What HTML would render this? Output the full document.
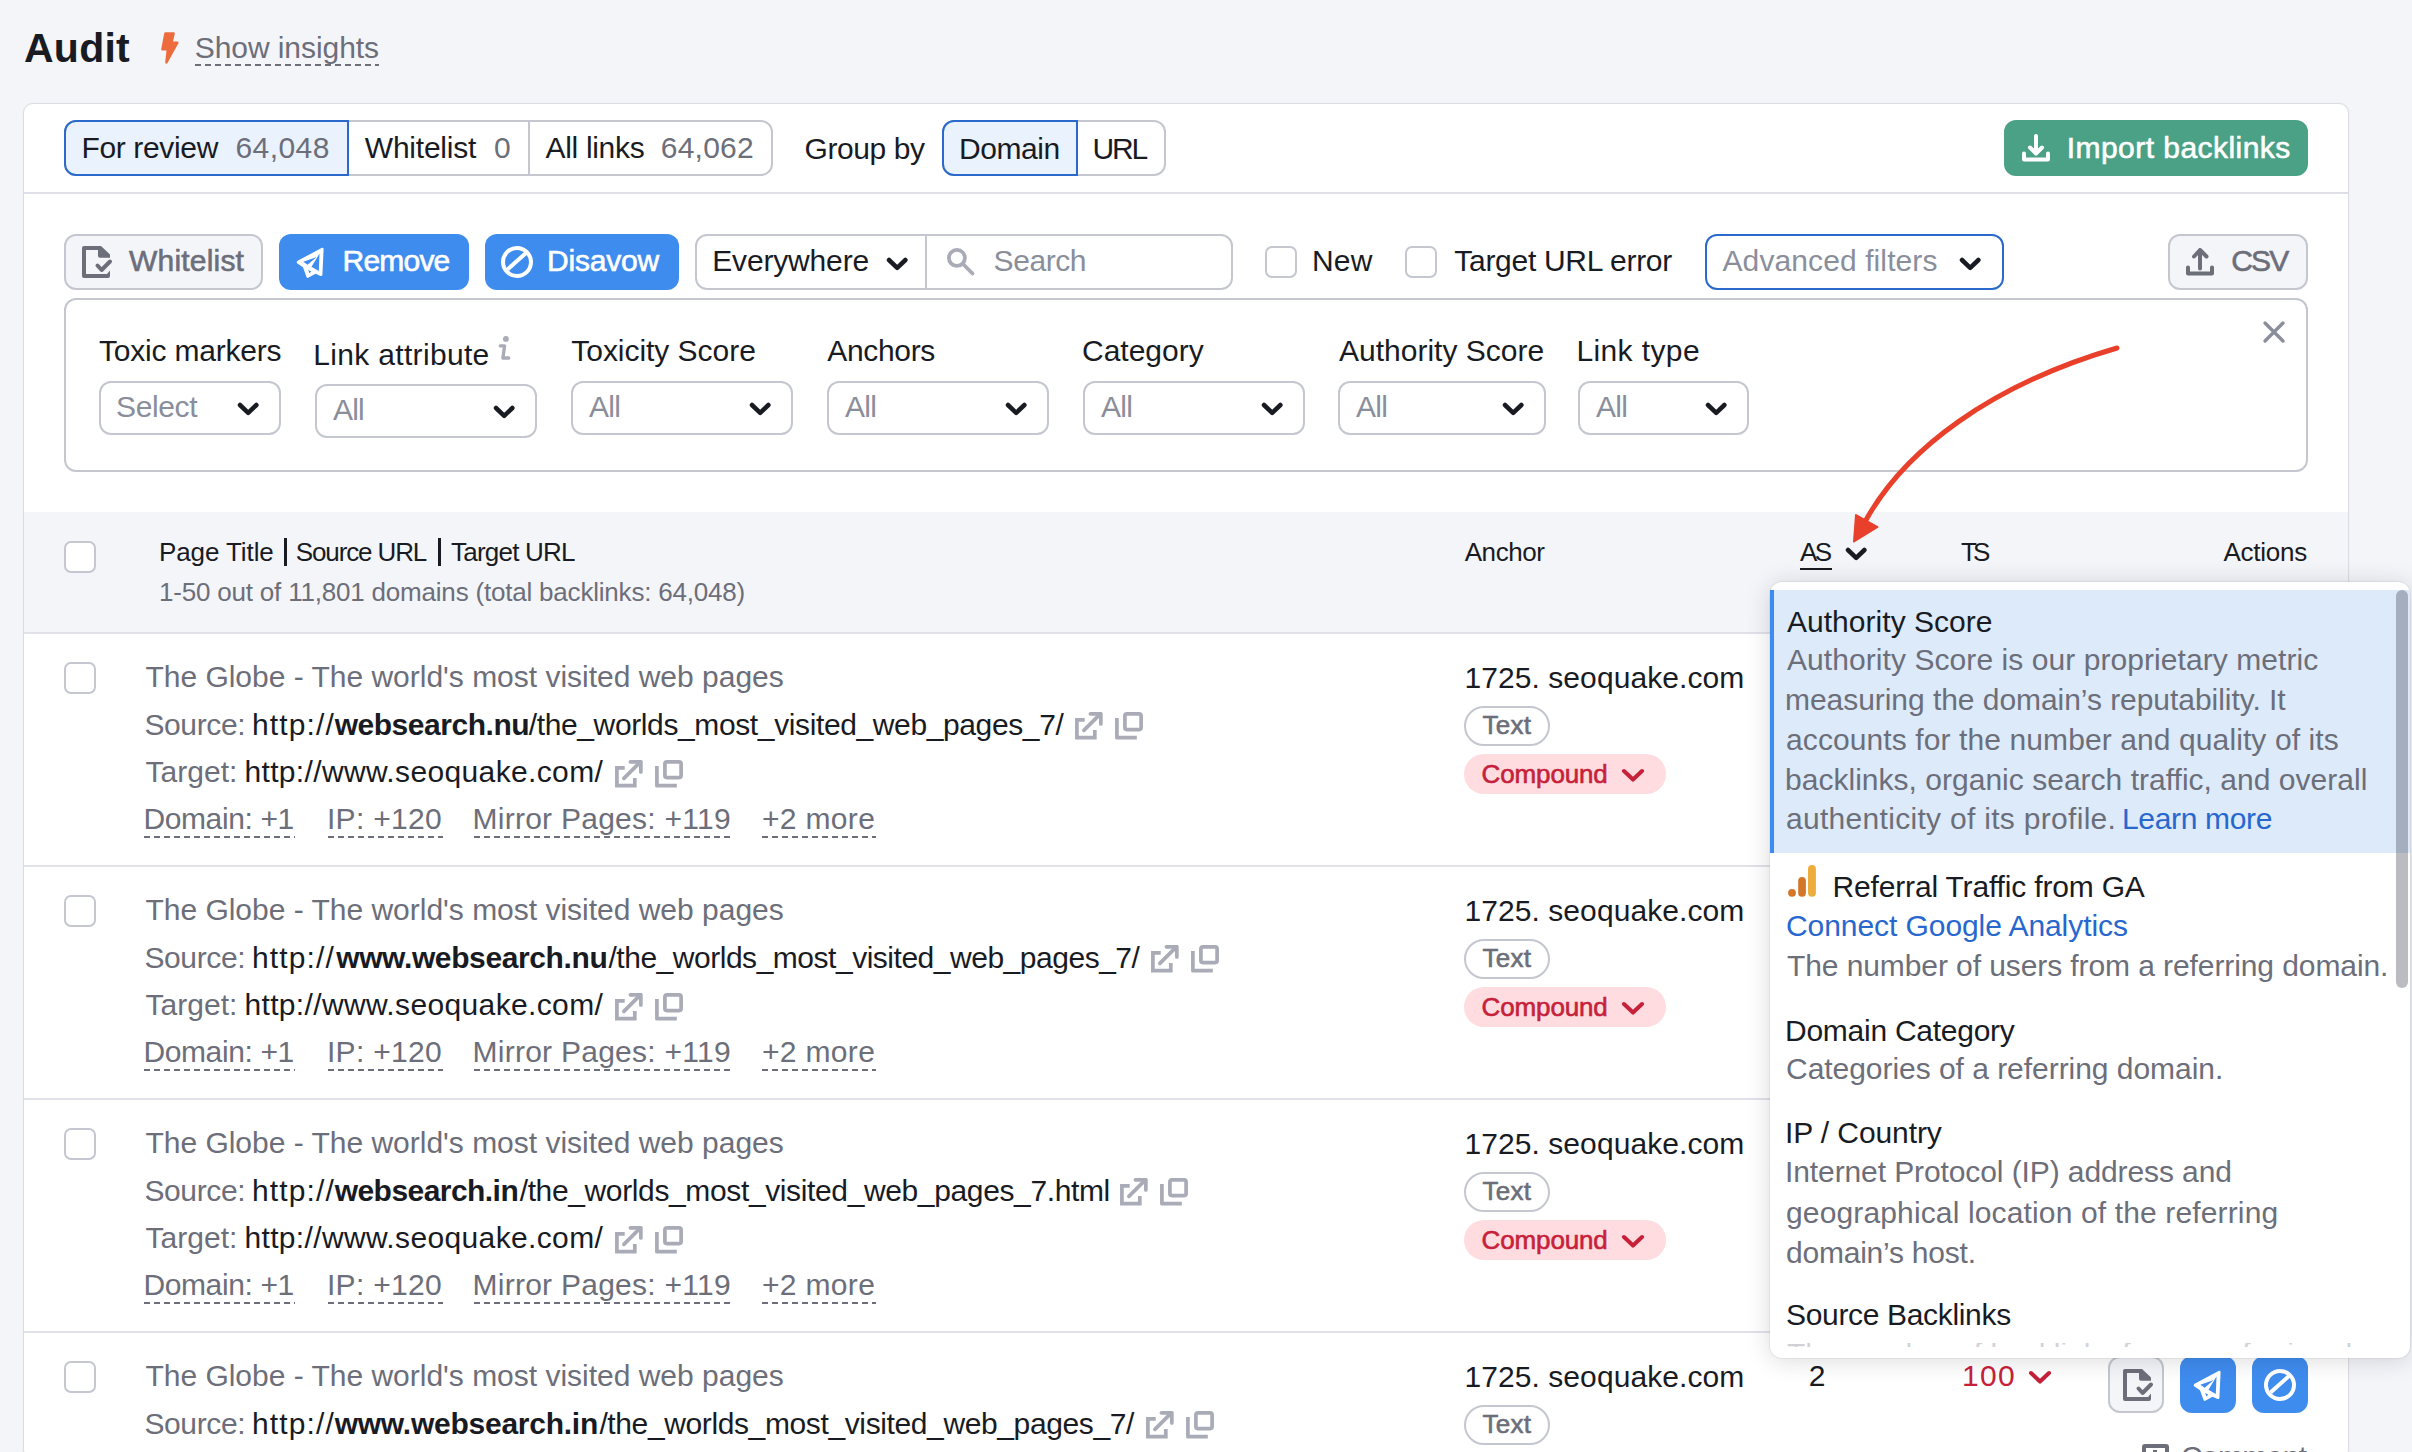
<!DOCTYPE html>
<html><head><meta charset="utf-8"><title>Audit</title>
<style>
html,body{margin:0;padding:0;width:2412px;height:1452px;overflow:hidden;background:#F4F5F9;font-family:"Liberation Sans", sans-serif;}
.a{position:absolute;box-sizing:border-box;}
.t{position:absolute;white-space:pre;}

</style></head><body>
<div class='t' style='left:24.0px;top:28.0px;font-size:41px;line-height:41px;font-weight:700;color:#191B23;letter-spacing:0.25px;'>Audit</div>
<svg class='a' style='left:160px;top:31px;' width='21' height='34' viewBox='0 0 21 34'><path d='M5.4 2.4 H13.6 L11.6 11.6 H17.4 L6.4 31.4 L7.8 18.2 H2.4 Z' fill='#EC6C3E' stroke='#EC6C3E' stroke-width='2.4' stroke-linejoin='round'/></svg>
<div class='t' style='left:194.7px;top:33.0px;font-size:30px;line-height:30px;font-weight:400;color:#6C6E79;letter-spacing:-0.06px;'>Show insights</div>
<div class='a' style='left:195px;top:64px;width:184px;height:2px;background:repeating-linear-gradient(90deg,#6C6E79 0 6px,transparent 6px 10px)'></div>
<div class='a' style='left:23px;top:103px;width:2326px;height:1357px;background:#fff;border:1px solid #DCDDE4;border-radius:10px;box-shadow:0 0 2px rgba(25,27,35,0.06);'></div>
<div class='a' style='left:64px;top:120px;width:709px;height:56px;border:2px solid #C4C7CF;border-radius:12px;background:#fff;'></div>
<div class='a' style='left:528px;top:120px;width:2px;height:56px;background:#C4C7CF;'></div>
<div class='a' style='left:64px;top:120px;width:285px;height:56px;border:2px solid #2B6ACC;border-radius:12px 0 0 12px;background:#EAF2FD;'></div>
<div class='t' style='left:81.4px;top:133.4px;font-size:30px;line-height:30px;font-weight:400;color:#191B23;letter-spacing:-0.34px;'>For review</div>
<div class='t' style='left:235.5px;top:133.4px;font-size:30px;line-height:30px;font-weight:400;color:#6C6E79;letter-spacing:0.42px;'>64,048</div>
<div class='t' style='left:364.8px;top:133.4px;font-size:30px;line-height:30px;font-weight:400;color:#191B23;letter-spacing:-0.23px;'>Whitelist</div>
<div class='t' style='left:494.0px;top:133.4px;font-size:30px;line-height:30px;font-weight:400;color:#6C6E79;letter-spacing:0.00px;'>0</div>
<div class='t' style='left:545.6px;top:133.4px;font-size:30px;line-height:30px;font-weight:400;color:#191B23;letter-spacing:-0.33px;'>All links</div>
<div class='t' style='left:660.7px;top:133.4px;font-size:30px;line-height:30px;font-weight:400;color:#6C6E79;letter-spacing:0.26px;'>64,062</div>
<div class='t' style='left:804.5px;top:133.5px;font-size:30px;line-height:30px;font-weight:400;color:#191B23;letter-spacing:-0.43px;'>Group by</div>
<div class='a' style='left:942px;top:120px;width:224px;height:56px;border:2px solid #C4C7CF;border-radius:12px;background:#fff;'></div>
<div class='a' style='left:942px;top:120px;width:136px;height:56px;border:2px solid #2B6ACC;border-radius:12px 0 0 12px;background:#EAF2FD;'></div>
<div class='t' style='left:958.9px;top:133.5px;font-size:30px;line-height:30px;font-weight:400;color:#191B23;letter-spacing:-0.42px;'>Domain</div>
<div class='t' style='left:1092.5px;top:133.5px;font-size:30px;line-height:30px;font-weight:400;color:#191B23;letter-spacing:-2.15px;'>URL</div>
<div class='a' style='left:2004px;top:120px;width:304px;height:56px;background:#4BA185;border-radius:12px;'></div>
<svg class='a' style='left:2014px;top:126px;' width='44' height='44' viewBox='0 0 44 44'><path d='M22 10 V27 M16 21.5 L22 27.5 L28 21.5 M10 27.5 V33.5 H34 V27.5' fill='none' stroke='#fff' stroke-width='4' stroke-linecap='round' stroke-linejoin='round'/></svg>
<div class='t' style='left:2066.7px;top:133.0px;font-size:30px;line-height:30px;font-weight:400;color:#fff;letter-spacing:0.46px;-webkit-text-stroke:0.6px;'>Import backlinks</div>
<div class='a' style='left:24px;top:192px;width:2324px;height:2px;background:#DEDFE8;'></div>
<div class='a' style='left:64px;top:234px;width:199px;height:56px;background:#F4F5F9;border:2px solid #C4C7CF;border-radius:12px;'></div>
<svg class='a' style='left:76px;top:240px;' width='44' height='44' viewBox='0 0 44 44'><path d='M6 8 Q6 6 8 6 H25 L34 14.5 V17.7 H24 Q22 17.7 22 15.7 V10 H10 V34 H31 L34 30.5 V36 Q34 38 32 38 H8 Q6 38 6 36 Z' fill='#6C6E79'/><path d='M21.5 25.5 L25.6 30 L34 21.5' fill='none' stroke='#6C6E79' stroke-width='4' stroke-linecap='round' stroke-linejoin='round'/></svg>
<div class='t' style='left:129.0px;top:246.0px;font-size:30px;line-height:30px;font-weight:400;color:#6C6E79;letter-spacing:0.20px;-webkit-text-stroke:0.6px;'>Whitelist</div>
<div class='a' style='left:279px;top:234px;width:190px;height:56px;background:#3F8CEF;border-radius:12px;'></div>
<svg class='a' style='left:290px;top:240px;' width='44' height='44' viewBox='0 0 44 44'><path fill-rule='evenodd' fill='#fff' d='M6.6 22.4 Q6.8 21.2 8 20.6 L32 7.8 Q33.6 7.6 33.6 9.2 L32.4 35 Q32 36.4 30.6 36 L25.5 33.8 L18.2 37.8 Q16.8 38.2 16.4 36.8 L13 27.3 L7.4 23.6 Z M13.3 21.8 L26.7 16.9 L17.6 24.8 Z M29.5 13.6 L28.8 30.9 L21.5 26.7 Z M18.2 30 L21.2 31.6 L19.4 33.2 Z'/></svg>
<div class='t' style='left:342.5px;top:246.0px;font-size:30px;line-height:30px;font-weight:400;color:#fff;letter-spacing:-0.78px;-webkit-text-stroke:0.6px;'>Remove</div>
<div class='a' style='left:485px;top:234px;width:194px;height:56px;background:#3F8CEF;border-radius:12px;'></div>
<svg class='a' style='left:494px;top:240px;' width='44' height='44' viewBox='0 0 44 44'><circle cx='23' cy='22' r='14' fill='none' stroke='#fff' stroke-width='4'/><path d='M13.5 29.5 L32.5 12.5' stroke='#fff' stroke-width='4'/></svg>
<div class='t' style='left:547.0px;top:246.0px;font-size:30px;line-height:30px;font-weight:400;color:#fff;letter-spacing:-0.22px;-webkit-text-stroke:0.6px;'>Disavow</div>
<div class='a' style='left:695px;top:234px;width:538px;height:56px;border:2px solid #C4C7CF;border-radius:12px;background:#fff;'></div>
<div class='a' style='left:925px;top:234px;width:2px;height:56px;background:#C4C7CF;'></div>
<div class='t' style='left:712.2px;top:246.0px;font-size:30px;line-height:30px;font-weight:400;color:#191B23;letter-spacing:-0.16px;'>Everywhere</div>
<svg class='a' style='left:885.8px;top:257.105px;' width='22.40000000000009' height='13.789999999999964' viewBox='0 0 22.40000000000009 13.789999999999964'><path d='M3 3 L11.2 10.79 L19.4 3' fill='none' stroke='#191B23' stroke-width='4.5' stroke-linecap='round' stroke-linejoin='round'/></svg>
<svg class='a' style='left:940px;top:242px;' width='44' height='44' viewBox='0 0 44 44'><circle cx='16.9' cy='15.9' r='8' fill='none' stroke='#A9ABB6' stroke-width='3.8'/><path d='M23.5 22.5 L32.5 31.5' stroke='#A9ABB6' stroke-width='3.8' stroke-linecap='round'/></svg>
<div class='t' style='left:993.6px;top:246.0px;font-size:30px;line-height:30px;font-weight:400;color:#8A8E9B;letter-spacing:-0.44px;'>Search</div>
<div class='a' style='left:1265px;top:246px;width:32px;height:32px;background:#fff;border:2px solid #C4C7CF;border-radius:7px;'></div>
<div class='t' style='left:1311.9px;top:246.0px;font-size:30px;line-height:30px;font-weight:400;color:#191B23;letter-spacing:0.20px;'>New</div>
<div class='a' style='left:1405px;top:246px;width:32px;height:32px;background:#fff;border:2px solid #C4C7CF;border-radius:7px;'></div>
<div class='t' style='left:1454.3px;top:246.0px;font-size:30px;line-height:30px;font-weight:400;color:#191B23;letter-spacing:-0.29px;'>Target URL error</div>
<div class='a' style='left:1705px;top:234px;width:299px;height:56px;border:2px solid #2B6ACC;border-radius:12px;background:#fff;'></div>
<div class='t' style='left:1722.5px;top:246.0px;font-size:30px;line-height:30px;font-weight:400;color:#8A8E9B;letter-spacing:0.10px;'>Advanced filters</div>
<svg class='a' style='left:1958.8px;top:257.105px;' width='22.40000000000009' height='13.789999999999964' viewBox='0 0 22.40000000000009 13.789999999999964'><path d='M3 3 L11.2 10.79 L19.4 3' fill='none' stroke='#191B23' stroke-width='4.5' stroke-linecap='round' stroke-linejoin='round'/></svg>
<div class='a' style='left:2168px;top:234px;width:140px;height:56px;background:#F4F5F9;border:2px solid #C4C7CF;border-radius:12px;'></div>
<svg class='a' style='left:2178px;top:240px;' width='44' height='44' viewBox='0 0 44 44'><path d='M22 28.5 V10 M16 16.5 L22 10 L28.5 16.5 M10 27.5 V33.5 H34 V27.5' fill='none' stroke='#6C6E79' stroke-width='4' stroke-linecap='round' stroke-linejoin='round'/></svg>
<div class='t' style='left:2231.3px;top:246.0px;font-size:30px;line-height:30px;font-weight:400;color:#6C6E79;letter-spacing:-1.85px;-webkit-text-stroke:0.6px;'>CSV</div>
<div class='a' style='left:64px;top:298px;width:2244px;height:174px;border:2px solid #C4C7CF;border-radius:12px;background:#fff;'></div>
<div class='t' style='left:99.0px;top:336.3px;font-size:30px;line-height:30px;font-weight:400;color:#191B23;letter-spacing:-0.21px;'>Toxic markers</div>
<div class='t' style='left:313.3px;top:339.6px;font-size:30px;line-height:30px;font-weight:400;color:#191B23;letter-spacing:0.32px;'>Link attribute</div>
<div class='t' style='left:571.3px;top:336.3px;font-size:30px;line-height:30px;font-weight:400;color:#191B23;letter-spacing:-0.04px;'>Toxicity Score</div>
<div class='t' style='left:827.2px;top:336.3px;font-size:30px;line-height:30px;font-weight:400;color:#191B23;letter-spacing:-0.32px;'>Anchors</div>
<div class='t' style='left:1082.0px;top:336.3px;font-size:30px;line-height:30px;font-weight:400;color:#191B23;letter-spacing:0.00px;'>Category</div>
<div class='t' style='left:1339.0px;top:336.3px;font-size:30px;line-height:30px;font-weight:400;color:#191B23;letter-spacing:0.00px;'>Authority Score</div>
<div class='t' style='left:1576.4px;top:336.3px;font-size:30px;line-height:30px;font-weight:400;color:#191B23;letter-spacing:0.39px;'>Link type</div>
<svg class='a' style='left:490px;top:330px;' width='30' height='36' viewBox='0 0 30 36'><circle cx='15.9' cy='8.9' r='2.9' fill='#A9ABB6'/><path d='M10.3 15.9 H14.6 L12.9 28 H18.8' fill='none' stroke='#A9ABB6' stroke-width='3.3' stroke-linecap='round' stroke-linejoin='round'/></svg>
<div class='a' style='left:99px;top:381px;width:182px;height:54px;border:2px solid #C4C7CF;border-radius:12px;background:#fff;'></div>
<div class='t' style='left:116.0px;top:392.0px;font-size:30px;line-height:30px;font-weight:400;color:#8A8E9B;letter-spacing:-0.36px;'>Select</div>
<svg class='a' style='left:236.8px;top:402.105px;' width='22.399999999999977' height='13.789999999999964' viewBox='0 0 22.399999999999977 13.789999999999964'><path d='M3 3 L11.2 10.79 L19.4 3' fill='none' stroke='#191B23' stroke-width='4.5' stroke-linecap='round' stroke-linejoin='round'/></svg>
<div class='a' style='left:315px;top:384px;width:222px;height:54px;border:2px solid #C4C7CF;border-radius:12px;background:#fff;'></div>
<div class='t' style='left:333.0px;top:395.0px;font-size:30px;line-height:30px;font-weight:400;color:#8A8E9B;letter-spacing:-0.80px;'>All</div>
<svg class='a' style='left:492.8px;top:405.105px;' width='22.400000000000034' height='13.789999999999964' viewBox='0 0 22.400000000000034 13.789999999999964'><path d='M3 3 L11.2 10.79 L19.4 3' fill='none' stroke='#191B23' stroke-width='4.5' stroke-linecap='round' stroke-linejoin='round'/></svg>
<div class='a' style='left:571px;top:381px;width:222px;height:54px;border:2px solid #C4C7CF;border-radius:12px;background:#fff;'></div>
<div class='t' style='left:589.0px;top:392.0px;font-size:30px;line-height:30px;font-weight:400;color:#8A8E9B;letter-spacing:-0.75px;'>All</div>
<svg class='a' style='left:748.8px;top:402.105px;' width='22.40000000000009' height='13.789999999999964' viewBox='0 0 22.40000000000009 13.789999999999964'><path d='M3 3 L11.2 10.79 L19.4 3' fill='none' stroke='#191B23' stroke-width='4.5' stroke-linecap='round' stroke-linejoin='round'/></svg>
<div class='a' style='left:827px;top:381px;width:222px;height:54px;border:2px solid #C4C7CF;border-radius:12px;background:#fff;'></div>
<div class='t' style='left:845.0px;top:392.0px;font-size:30px;line-height:30px;font-weight:400;color:#8A8E9B;letter-spacing:-0.75px;'>All</div>
<svg class='a' style='left:1004.8px;top:402.105px;' width='22.40000000000009' height='13.789999999999964' viewBox='0 0 22.40000000000009 13.789999999999964'><path d='M3 3 L11.2 10.79 L19.4 3' fill='none' stroke='#191B23' stroke-width='4.5' stroke-linecap='round' stroke-linejoin='round'/></svg>
<div class='a' style='left:1083px;top:381px;width:222px;height:54px;border:2px solid #C4C7CF;border-radius:12px;background:#fff;'></div>
<div class='t' style='left:1101.0px;top:392.0px;font-size:30px;line-height:30px;font-weight:400;color:#8A8E9B;letter-spacing:-0.75px;'>All</div>
<svg class='a' style='left:1260.8px;top:402.105px;' width='22.40000000000009' height='13.789999999999964' viewBox='0 0 22.40000000000009 13.789999999999964'><path d='M3 3 L11.2 10.79 L19.4 3' fill='none' stroke='#191B23' stroke-width='4.5' stroke-linecap='round' stroke-linejoin='round'/></svg>
<div class='a' style='left:1338px;top:381px;width:208px;height:54px;border:2px solid #C4C7CF;border-radius:12px;background:#fff;'></div>
<div class='t' style='left:1356.0px;top:392.0px;font-size:30px;line-height:30px;font-weight:400;color:#8A8E9B;letter-spacing:-0.75px;'>All</div>
<svg class='a' style='left:1501.8px;top:402.105px;' width='22.40000000000009' height='13.789999999999964' viewBox='0 0 22.40000000000009 13.789999999999964'><path d='M3 3 L11.2 10.79 L19.4 3' fill='none' stroke='#191B23' stroke-width='4.5' stroke-linecap='round' stroke-linejoin='round'/></svg>
<div class='a' style='left:1578px;top:381px;width:171px;height:54px;border:2px solid #C4C7CF;border-radius:12px;background:#fff;'></div>
<div class='t' style='left:1596.0px;top:392.0px;font-size:30px;line-height:30px;font-weight:400;color:#8A8E9B;letter-spacing:-0.75px;'>All</div>
<svg class='a' style='left:1704.8px;top:402.105px;' width='22.40000000000009' height='13.789999999999964' viewBox='0 0 22.40000000000009 13.789999999999964'><path d='M3 3 L11.2 10.79 L19.4 3' fill='none' stroke='#191B23' stroke-width='4.5' stroke-linecap='round' stroke-linejoin='round'/></svg>
<svg class='a' style='left:2262px;top:320px;' width='24' height='24' viewBox='0 0 24 24'><path d='M3 3 L21 21 M21 3 L3 21' stroke='#8A8E9B' stroke-width='3.4' stroke-linecap='round'/></svg>
<div class='a' style='left:24px;top:512px;width:2324px;height:121px;background:#F4F5F9;'></div>
<div class='a' style='left:24px;top:632px;width:2324px;height:2px;background:#E0E1E9;'></div>
<div class='a' style='left:64px;top:541px;width:32px;height:32px;background:#fff;border:2px solid #C4C7CF;border-radius:7px;'></div>
<div class='t' style='left:159.0px;top:539.4px;font-size:26px;line-height:26px;font-weight:400;color:#191B23;letter-spacing:-0.09px;'>Page Title</div>
<div class='a' style='left:284px;top:537.5px;width:2.5px;height:28.5px;background:#191B23;'></div>
<div class='t' style='left:295.8px;top:539.4px;font-size:26px;line-height:26px;font-weight:400;color:#191B23;letter-spacing:-1.13px;'>Source URL</div>
<div class='a' style='left:438px;top:537.5px;width:2.5px;height:28.5px;background:#191B23;'></div>
<div class='t' style='left:451.0px;top:539.4px;font-size:26px;line-height:26px;font-weight:400;color:#191B23;letter-spacing:-0.78px;'>Target URL</div>
<div class='t' style='left:159.0px;top:579.0px;font-size:26px;line-height:26px;font-weight:400;color:#6C6E79;letter-spacing:-0.20px;'>1-50 out of 11,801 domains (total backlinks: 64,048)</div>
<div class='t' style='left:1464.7px;top:538.5px;font-size:26px;line-height:26px;font-weight:400;color:#191B23;letter-spacing:-0.42px;'>Anchor</div>
<div class='t' style='left:1800.0px;top:539.0px;font-size:26px;line-height:26px;font-weight:400;color:#191B23;letter-spacing:-2.70px;'>AS</div>
<div class='a' style='left:1800px;top:568px;width:32px;height:2px;background:#191B23;'></div>
<svg class='a' style='left:1844.8px;top:547.105px;' width='22.40000000000009' height='13.789999999999964' viewBox='0 0 22.40000000000009 13.789999999999964'><path d='M3 3 L11.2 10.79 L19.4 3' fill='none' stroke='#191B23' stroke-width='4.5' stroke-linecap='round' stroke-linejoin='round'/></svg>
<div class='t' style='left:1961.0px;top:539.0px;font-size:26px;line-height:26px;font-weight:400;color:#191B23;letter-spacing:-4.00px;'>TS</div>
<div class='t' style='left:2223.4px;top:539.0px;font-size:26px;line-height:26px;font-weight:400;color:#191B23;letter-spacing:-0.23px;'>Actions</div>
<div class='a' style='left:64px;top:662px;width:32px;height:32px;background:#fff;border:2px solid #C4C7CF;border-radius:7px;'></div>
<div class='t' style='left:145.4px;top:662.4px;font-size:30px;line-height:30px;font-weight:400;color:#6C6E79;letter-spacing:-0.01px;'>The Globe - The world's most visited web pages</div>
<div class='t' style='left:144.4px;top:709.5px;font-size:30px;line-height:30px;font-weight:400;color:#6C6E79;letter-spacing:-0.37px;'>Source:</div>
<div class='t' style='left:251.9px;top:709.5px;font-size:30px;line-height:30px;font-weight:400;color:#191B23;letter-spacing:1.13px;'>http://</div>
<div class='t' style='left:334.7px;top:709.5px;font-size:30px;line-height:30px;font-weight:700;color:#191B23;letter-spacing:-0.47px;'>websearch.nu</div>
<div class='t' style='left:528.8px;top:709.5px;font-size:30px;line-height:30px;font-weight:400;color:#191B23;letter-spacing:-0.38px;'>/the_worlds_most_visited_web_pages_7/</div>
<svg class='a' style='left:1073px;top:710px;' width='34' height='34' viewBox='0 0 34 34'><g transform='translate(2,2)' fill='none' stroke='#A9ABB6' stroke-width='3.7'><path d='M9.7 7.9 H1.9 V25.6 H19.8 V17.9'/><path d='M15.4 1.85 H25.85 V11.9' stroke-linecap='round' stroke-linejoin='round'/><path d='M8.9 18.4 L25.4 1.9' stroke-linecap='round'/></g></svg>
<svg class='a' style='left:1113px;top:710px;' width='34' height='34' viewBox='0 0 34 34'><g transform='translate(2,2)' fill='none' stroke='#A9ABB6' stroke-width='3.7'><path d='M1.9 6 V25.65 H21.8' stroke-linejoin='round'/><rect x='9.9' y='1.9' width='16.2' height='15.7' rx='2'/></g></svg>
<div class='t' style='left:145.4px;top:757.0px;font-size:30px;line-height:30px;font-weight:400;color:#6C6E79;letter-spacing:0.05px;'>Target:</div>
<div class='t' style='left:244.4px;top:757.0px;font-size:30px;line-height:30px;font-weight:400;color:#191B23;letter-spacing:0.36px;'>http://www.seoquake.com/</div>
<svg class='a' style='left:613px;top:758px;' width='34' height='34' viewBox='0 0 34 34'><g transform='translate(2,2)' fill='none' stroke='#A9ABB6' stroke-width='3.7'><path d='M9.7 7.9 H1.9 V25.6 H19.8 V17.9'/><path d='M15.4 1.85 H25.85 V11.9' stroke-linecap='round' stroke-linejoin='round'/><path d='M8.9 18.4 L25.4 1.9' stroke-linecap='round'/></g></svg>
<svg class='a' style='left:653px;top:758px;' width='34' height='34' viewBox='0 0 34 34'><g transform='translate(2,2)' fill='none' stroke='#A9ABB6' stroke-width='3.7'><path d='M1.9 6 V25.65 H21.8' stroke-linejoin='round'/><rect x='9.9' y='1.9' width='16.2' height='15.7' rx='2'/></g></svg>
<div class='t' style='left:143.4px;top:804.4px;font-size:30px;line-height:30px;font-weight:400;color:#6C6E79;letter-spacing:-0.38px;'>Domain: +1</div>
<div class='a' style='left:144.4px;top:836px;width:150.6px;height:2px;background:repeating-linear-gradient(90deg,#6C6E79 0 6px,transparent 6px 10px)'></div>
<div class='t' style='left:327.0px;top:804.4px;font-size:30px;line-height:30px;font-weight:400;color:#6C6E79;letter-spacing:0.29px;'>IP: +120</div>
<div class='a' style='left:328px;top:836px;width:115px;height:2px;background:repeating-linear-gradient(90deg,#6C6E79 0 6px,transparent 6px 10px)'></div>
<div class='t' style='left:472.5px;top:804.4px;font-size:30px;line-height:30px;font-weight:400;color:#6C6E79;letter-spacing:0.26px;'>Mirror Pages: +119</div>
<div class='a' style='left:473.5px;top:836px;width:258.5px;height:2px;background:repeating-linear-gradient(90deg,#6C6E79 0 6px,transparent 6px 10px)'></div>
<div class='t' style='left:762.0px;top:804.4px;font-size:30px;line-height:30px;font-weight:400;color:#6C6E79;letter-spacing:0.33px;'>+2 more</div>
<div class='a' style='left:762px;top:836px;width:114px;height:2px;background:repeating-linear-gradient(90deg,#6C6E79 0 6px,transparent 6px 10px)'></div>
<div class='t' style='left:1464.4px;top:663.0px;font-size:30px;line-height:30px;font-weight:400;color:#191B23;letter-spacing:0.08px;'>1725. seoquake.com</div>
<div class='a' style='left:1464px;top:706px;width:86px;height:40px;border:2px solid #C4C7CF;border-radius:20px;background:#fff;'></div>
<div class='t' style='left:1482.6px;top:712.3px;font-size:26px;line-height:26px;font-weight:400;color:#6C6E79;letter-spacing:0.27px;-webkit-text-stroke:0.6px;'>Text</div>
<div class='a' style='left:1464px;top:754px;width:202px;height:40px;background:#FFDCE0;border-radius:20px;'></div>
<div class='t' style='left:1481.6px;top:760.8px;font-size:26px;line-height:26px;font-weight:400;color:#C7213A;letter-spacing:-0.14px;-webkit-text-stroke:0.6px;'>Compound</div>
<svg class='a' style='left:1621.0px;top:767.725px;' width='24.0' height='14.549999999999955' viewBox='0 0 24.0 14.549999999999955'><path d='M3 3 L12.0 11.549999999999999 L21 3' fill='none' stroke='#C7213A' stroke-width='4' stroke-linecap='round' stroke-linejoin='round'/></svg>
<div class='a' style='left:24px;top:865px;width:2324px;height:2px;background:#E0E1E9;'></div>
<div class='a' style='left:64px;top:895px;width:32px;height:32px;background:#fff;border:2px solid #C4C7CF;border-radius:7px;'></div>
<div class='t' style='left:145.4px;top:895.4px;font-size:30px;line-height:30px;font-weight:400;color:#6C6E79;letter-spacing:-0.01px;'>The Globe - The world's most visited web pages</div>
<div class='t' style='left:144.4px;top:942.5px;font-size:30px;line-height:30px;font-weight:400;color:#6C6E79;letter-spacing:-0.37px;'>Source:</div>
<div class='t' style='left:251.9px;top:942.5px;font-size:30px;line-height:30px;font-weight:400;color:#191B23;letter-spacing:1.13px;'>http://</div>
<div class='t' style='left:336.2px;top:942.5px;font-size:30px;line-height:30px;font-weight:700;color:#191B23;letter-spacing:-0.38px;'>www.websearch.nu</div>
<div class='t' style='left:608.5px;top:942.5px;font-size:30px;line-height:30px;font-weight:400;color:#191B23;letter-spacing:-0.48px;'>/the_worlds_most_visited_web_pages_7/</div>
<svg class='a' style='left:1149px;top:943px;' width='34' height='34' viewBox='0 0 34 34'><g transform='translate(2,2)' fill='none' stroke='#A9ABB6' stroke-width='3.7'><path d='M9.7 7.9 H1.9 V25.6 H19.8 V17.9'/><path d='M15.4 1.85 H25.85 V11.9' stroke-linecap='round' stroke-linejoin='round'/><path d='M8.9 18.4 L25.4 1.9' stroke-linecap='round'/></g></svg>
<svg class='a' style='left:1189px;top:943px;' width='34' height='34' viewBox='0 0 34 34'><g transform='translate(2,2)' fill='none' stroke='#A9ABB6' stroke-width='3.7'><path d='M1.9 6 V25.65 H21.8' stroke-linejoin='round'/><rect x='9.9' y='1.9' width='16.2' height='15.7' rx='2'/></g></svg>
<div class='t' style='left:145.4px;top:990.0px;font-size:30px;line-height:30px;font-weight:400;color:#6C6E79;letter-spacing:0.05px;'>Target:</div>
<div class='t' style='left:244.4px;top:990.0px;font-size:30px;line-height:30px;font-weight:400;color:#191B23;letter-spacing:0.36px;'>http://www.seoquake.com/</div>
<svg class='a' style='left:613px;top:991px;' width='34' height='34' viewBox='0 0 34 34'><g transform='translate(2,2)' fill='none' stroke='#A9ABB6' stroke-width='3.7'><path d='M9.7 7.9 H1.9 V25.6 H19.8 V17.9'/><path d='M15.4 1.85 H25.85 V11.9' stroke-linecap='round' stroke-linejoin='round'/><path d='M8.9 18.4 L25.4 1.9' stroke-linecap='round'/></g></svg>
<svg class='a' style='left:653px;top:991px;' width='34' height='34' viewBox='0 0 34 34'><g transform='translate(2,2)' fill='none' stroke='#A9ABB6' stroke-width='3.7'><path d='M1.9 6 V25.65 H21.8' stroke-linejoin='round'/><rect x='9.9' y='1.9' width='16.2' height='15.7' rx='2'/></g></svg>
<div class='t' style='left:143.4px;top:1037.4px;font-size:30px;line-height:30px;font-weight:400;color:#6C6E79;letter-spacing:-0.38px;'>Domain: +1</div>
<div class='a' style='left:144.4px;top:1069px;width:150.6px;height:2px;background:repeating-linear-gradient(90deg,#6C6E79 0 6px,transparent 6px 10px)'></div>
<div class='t' style='left:327.0px;top:1037.4px;font-size:30px;line-height:30px;font-weight:400;color:#6C6E79;letter-spacing:0.29px;'>IP: +120</div>
<div class='a' style='left:328px;top:1069px;width:115px;height:2px;background:repeating-linear-gradient(90deg,#6C6E79 0 6px,transparent 6px 10px)'></div>
<div class='t' style='left:472.5px;top:1037.4px;font-size:30px;line-height:30px;font-weight:400;color:#6C6E79;letter-spacing:0.26px;'>Mirror Pages: +119</div>
<div class='a' style='left:473.5px;top:1069px;width:258.5px;height:2px;background:repeating-linear-gradient(90deg,#6C6E79 0 6px,transparent 6px 10px)'></div>
<div class='t' style='left:762.0px;top:1037.4px;font-size:30px;line-height:30px;font-weight:400;color:#6C6E79;letter-spacing:0.33px;'>+2 more</div>
<div class='a' style='left:762px;top:1069px;width:114px;height:2px;background:repeating-linear-gradient(90deg,#6C6E79 0 6px,transparent 6px 10px)'></div>
<div class='t' style='left:1464.4px;top:896.0px;font-size:30px;line-height:30px;font-weight:400;color:#191B23;letter-spacing:0.08px;'>1725. seoquake.com</div>
<div class='a' style='left:1464px;top:939px;width:86px;height:40px;border:2px solid #C4C7CF;border-radius:20px;background:#fff;'></div>
<div class='t' style='left:1482.6px;top:945.3px;font-size:26px;line-height:26px;font-weight:400;color:#6C6E79;letter-spacing:0.27px;-webkit-text-stroke:0.6px;'>Text</div>
<div class='a' style='left:1464px;top:987px;width:202px;height:40px;background:#FFDCE0;border-radius:20px;'></div>
<div class='t' style='left:1481.6px;top:993.8px;font-size:26px;line-height:26px;font-weight:400;color:#C7213A;letter-spacing:-0.14px;-webkit-text-stroke:0.6px;'>Compound</div>
<svg class='a' style='left:1621.0px;top:1000.725px;' width='24.0' height='14.549999999999955' viewBox='0 0 24.0 14.549999999999955'><path d='M3 3 L12.0 11.549999999999999 L21 3' fill='none' stroke='#C7213A' stroke-width='4' stroke-linecap='round' stroke-linejoin='round'/></svg>
<div class='a' style='left:24px;top:1098px;width:2324px;height:2px;background:#E0E1E9;'></div>
<div class='a' style='left:64px;top:1128px;width:32px;height:32px;background:#fff;border:2px solid #C4C7CF;border-radius:7px;'></div>
<div class='t' style='left:145.4px;top:1128.4px;font-size:30px;line-height:30px;font-weight:400;color:#6C6E79;letter-spacing:-0.01px;'>The Globe - The world's most visited web pages</div>
<div class='t' style='left:144.4px;top:1175.5px;font-size:30px;line-height:30px;font-weight:400;color:#6C6E79;letter-spacing:-0.37px;'>Source:</div>
<div class='t' style='left:251.9px;top:1175.5px;font-size:30px;line-height:30px;font-weight:400;color:#191B23;letter-spacing:1.13px;'>http://</div>
<div class='t' style='left:334.7px;top:1175.5px;font-size:30px;line-height:30px;font-weight:700;color:#191B23;letter-spacing:-0.55px;'>websearch.in</div>
<div class='t' style='left:519.7px;top:1175.5px;font-size:30px;line-height:30px;font-weight:400;color:#191B23;letter-spacing:-0.37px;'>/the_worlds_most_visited_web_pages_7.html</div>
<svg class='a' style='left:1118px;top:1176px;' width='34' height='34' viewBox='0 0 34 34'><g transform='translate(2,2)' fill='none' stroke='#A9ABB6' stroke-width='3.7'><path d='M9.7 7.9 H1.9 V25.6 H19.8 V17.9'/><path d='M15.4 1.85 H25.85 V11.9' stroke-linecap='round' stroke-linejoin='round'/><path d='M8.9 18.4 L25.4 1.9' stroke-linecap='round'/></g></svg>
<svg class='a' style='left:1158px;top:1176px;' width='34' height='34' viewBox='0 0 34 34'><g transform='translate(2,2)' fill='none' stroke='#A9ABB6' stroke-width='3.7'><path d='M1.9 6 V25.65 H21.8' stroke-linejoin='round'/><rect x='9.9' y='1.9' width='16.2' height='15.7' rx='2'/></g></svg>
<div class='t' style='left:145.4px;top:1223.0px;font-size:30px;line-height:30px;font-weight:400;color:#6C6E79;letter-spacing:0.05px;'>Target:</div>
<div class='t' style='left:244.4px;top:1223.0px;font-size:30px;line-height:30px;font-weight:400;color:#191B23;letter-spacing:0.36px;'>http://www.seoquake.com/</div>
<svg class='a' style='left:613px;top:1224px;' width='34' height='34' viewBox='0 0 34 34'><g transform='translate(2,2)' fill='none' stroke='#A9ABB6' stroke-width='3.7'><path d='M9.7 7.9 H1.9 V25.6 H19.8 V17.9'/><path d='M15.4 1.85 H25.85 V11.9' stroke-linecap='round' stroke-linejoin='round'/><path d='M8.9 18.4 L25.4 1.9' stroke-linecap='round'/></g></svg>
<svg class='a' style='left:653px;top:1224px;' width='34' height='34' viewBox='0 0 34 34'><g transform='translate(2,2)' fill='none' stroke='#A9ABB6' stroke-width='3.7'><path d='M1.9 6 V25.65 H21.8' stroke-linejoin='round'/><rect x='9.9' y='1.9' width='16.2' height='15.7' rx='2'/></g></svg>
<div class='t' style='left:143.4px;top:1270.4px;font-size:30px;line-height:30px;font-weight:400;color:#6C6E79;letter-spacing:-0.38px;'>Domain: +1</div>
<div class='a' style='left:144.4px;top:1302px;width:150.6px;height:2px;background:repeating-linear-gradient(90deg,#6C6E79 0 6px,transparent 6px 10px)'></div>
<div class='t' style='left:327.0px;top:1270.4px;font-size:30px;line-height:30px;font-weight:400;color:#6C6E79;letter-spacing:0.29px;'>IP: +120</div>
<div class='a' style='left:328px;top:1302px;width:115px;height:2px;background:repeating-linear-gradient(90deg,#6C6E79 0 6px,transparent 6px 10px)'></div>
<div class='t' style='left:472.5px;top:1270.4px;font-size:30px;line-height:30px;font-weight:400;color:#6C6E79;letter-spacing:0.26px;'>Mirror Pages: +119</div>
<div class='a' style='left:473.5px;top:1302px;width:258.5px;height:2px;background:repeating-linear-gradient(90deg,#6C6E79 0 6px,transparent 6px 10px)'></div>
<div class='t' style='left:762.0px;top:1270.4px;font-size:30px;line-height:30px;font-weight:400;color:#6C6E79;letter-spacing:0.33px;'>+2 more</div>
<div class='a' style='left:762px;top:1302px;width:114px;height:2px;background:repeating-linear-gradient(90deg,#6C6E79 0 6px,transparent 6px 10px)'></div>
<div class='t' style='left:1464.4px;top:1129.0px;font-size:30px;line-height:30px;font-weight:400;color:#191B23;letter-spacing:0.08px;'>1725. seoquake.com</div>
<div class='a' style='left:1464px;top:1172px;width:86px;height:40px;border:2px solid #C4C7CF;border-radius:20px;background:#fff;'></div>
<div class='t' style='left:1482.6px;top:1178.3px;font-size:26px;line-height:26px;font-weight:400;color:#6C6E79;letter-spacing:0.27px;-webkit-text-stroke:0.6px;'>Text</div>
<div class='a' style='left:1464px;top:1220px;width:202px;height:40px;background:#FFDCE0;border-radius:20px;'></div>
<div class='t' style='left:1481.6px;top:1226.8px;font-size:26px;line-height:26px;font-weight:400;color:#C7213A;letter-spacing:-0.14px;-webkit-text-stroke:0.6px;'>Compound</div>
<svg class='a' style='left:1621.0px;top:1233.725px;' width='24.0' height='14.550000000000182' viewBox='0 0 24.0 14.550000000000182'><path d='M3 3 L12.0 11.549999999999999 L21 3' fill='none' stroke='#C7213A' stroke-width='4' stroke-linecap='round' stroke-linejoin='round'/></svg>
<div class='a' style='left:24px;top:1331px;width:2324px;height:2px;background:#E0E1E9;'></div>
<div class='a' style='left:64px;top:1361px;width:32px;height:32px;background:#fff;border:2px solid #C4C7CF;border-radius:7px;'></div>
<div class='t' style='left:145.4px;top:1361.4px;font-size:30px;line-height:30px;font-weight:400;color:#6C6E79;letter-spacing:-0.01px;'>The Globe - The world's most visited web pages</div>
<div class='t' style='left:144.4px;top:1408.5px;font-size:30px;line-height:30px;font-weight:400;color:#6C6E79;letter-spacing:-0.37px;'>Source:</div>
<div class='t' style='left:251.9px;top:1408.5px;font-size:30px;line-height:30px;font-weight:400;color:#191B23;letter-spacing:1.13px;'>http://</div>
<div class='t' style='left:334.7px;top:1408.5px;font-size:30px;line-height:30px;font-weight:700;color:#191B23;letter-spacing:-0.25px;'>www.websearch.in</div>
<div class='t' style='left:599.4px;top:1408.5px;font-size:30px;line-height:30px;font-weight:400;color:#191B23;letter-spacing:-0.38px;'>/the_worlds_most_visited_web_pages_7/</div>
<svg class='a' style='left:1144px;top:1409px;' width='34' height='34' viewBox='0 0 34 34'><g transform='translate(2,2)' fill='none' stroke='#A9ABB6' stroke-width='3.7'><path d='M9.7 7.9 H1.9 V25.6 H19.8 V17.9'/><path d='M15.4 1.85 H25.85 V11.9' stroke-linecap='round' stroke-linejoin='round'/><path d='M8.9 18.4 L25.4 1.9' stroke-linecap='round'/></g></svg>
<svg class='a' style='left:1184px;top:1409px;' width='34' height='34' viewBox='0 0 34 34'><g transform='translate(2,2)' fill='none' stroke='#A9ABB6' stroke-width='3.7'><path d='M1.9 6 V25.65 H21.8' stroke-linejoin='round'/><rect x='9.9' y='1.9' width='16.2' height='15.7' rx='2'/></g></svg>
<div class='t' style='left:145.4px;top:1456.0px;font-size:30px;line-height:30px;font-weight:400;color:#6C6E79;letter-spacing:0.05px;'>Target:</div>
<div class='t' style='left:244.4px;top:1456.0px;font-size:30px;line-height:30px;font-weight:400;color:#191B23;letter-spacing:0.36px;'>http://www.seoquake.com/</div>
<svg class='a' style='left:613px;top:1457px;' width='34' height='34' viewBox='0 0 34 34'><g transform='translate(2,2)' fill='none' stroke='#A9ABB6' stroke-width='3.7'><path d='M9.7 7.9 H1.9 V25.6 H19.8 V17.9'/><path d='M15.4 1.85 H25.85 V11.9' stroke-linecap='round' stroke-linejoin='round'/><path d='M8.9 18.4 L25.4 1.9' stroke-linecap='round'/></g></svg>
<svg class='a' style='left:653px;top:1457px;' width='34' height='34' viewBox='0 0 34 34'><g transform='translate(2,2)' fill='none' stroke='#A9ABB6' stroke-width='3.7'><path d='M1.9 6 V25.65 H21.8' stroke-linejoin='round'/><rect x='9.9' y='1.9' width='16.2' height='15.7' rx='2'/></g></svg>
<div class='t' style='left:143.4px;top:1503.4px;font-size:30px;line-height:30px;font-weight:400;color:#6C6E79;letter-spacing:-0.38px;'>Domain: +1</div>
<div class='a' style='left:144.4px;top:1535px;width:150.6px;height:2px;background:repeating-linear-gradient(90deg,#6C6E79 0 6px,transparent 6px 10px)'></div>
<div class='t' style='left:327.0px;top:1503.4px;font-size:30px;line-height:30px;font-weight:400;color:#6C6E79;letter-spacing:0.29px;'>IP: +120</div>
<div class='a' style='left:328px;top:1535px;width:115px;height:2px;background:repeating-linear-gradient(90deg,#6C6E79 0 6px,transparent 6px 10px)'></div>
<div class='t' style='left:472.5px;top:1503.4px;font-size:30px;line-height:30px;font-weight:400;color:#6C6E79;letter-spacing:0.26px;'>Mirror Pages: +119</div>
<div class='a' style='left:473.5px;top:1535px;width:258.5px;height:2px;background:repeating-linear-gradient(90deg,#6C6E79 0 6px,transparent 6px 10px)'></div>
<div class='t' style='left:762.0px;top:1503.4px;font-size:30px;line-height:30px;font-weight:400;color:#6C6E79;letter-spacing:0.33px;'>+2 more</div>
<div class='a' style='left:762px;top:1535px;width:114px;height:2px;background:repeating-linear-gradient(90deg,#6C6E79 0 6px,transparent 6px 10px)'></div>
<div class='t' style='left:1464.4px;top:1362.0px;font-size:30px;line-height:30px;font-weight:400;color:#191B23;letter-spacing:0.08px;'>1725. seoquake.com</div>
<div class='a' style='left:1464px;top:1405px;width:86px;height:40px;border:2px solid #C4C7CF;border-radius:20px;background:#fff;'></div>
<div class='t' style='left:1482.6px;top:1411.3px;font-size:26px;line-height:26px;font-weight:400;color:#6C6E79;letter-spacing:0.27px;-webkit-text-stroke:0.6px;'>Text</div>
<div class='t' style='left:1808.8px;top:1361.0px;font-size:30px;line-height:30px;font-weight:400;color:#191B23;letter-spacing:0.00px;'>2</div>
<div class='t' style='left:1961.9px;top:1361.0px;font-size:30px;line-height:30px;font-weight:400;color:#C7213A;letter-spacing:1.40px;'>100</div>
<svg class='a' style='left:2028.0px;top:1369.725px;' width='24.0' height='14.550000000000182' viewBox='0 0 24.0 14.550000000000182'><path d='M3 3 L12.0 11.549999999999999 L21 3' fill='none' stroke='#C7213A' stroke-width='4' stroke-linecap='round' stroke-linejoin='round'/></svg>
<div class='a' style='left:2108px;top:1356px;width:56px;height:57px;background:#F4F5F9;border:2px solid #C4C7CF;border-radius:12px;'></div>
<svg class='a' style='left:2116.5px;top:1363px;' width='44.0' height='44' viewBox='0 0 44.0 44'><path d='M6 8 Q6 6 8 6 H25 L34 14.5 V17.7 H24 Q22 17.7 22 15.7 V10 H10 V34 H31 L34 30.5 V36 Q34 38 32 38 H8 Q6 38 6 36 Z' fill='#6C6E79'/><path d='M21.5 25.5 L25.6 30 L34 21.5' fill='none' stroke='#6C6E79' stroke-width='4' stroke-linecap='round' stroke-linejoin='round'/></svg>
<div class='a' style='left:2180px;top:1356px;width:56px;height:57px;background:#3F8CEF;border-radius:12px;'></div>
<svg class='a' style='left:2187px;top:1363px;' width='44' height='44' viewBox='0 0 44 44'><path fill-rule='evenodd' fill='#fff' d='M6.6 22.4 Q6.8 21.2 8 20.6 L32 7.8 Q33.6 7.6 33.6 9.2 L32.4 35 Q32 36.4 30.6 36 L25.5 33.8 L18.2 37.8 Q16.8 38.2 16.4 36.8 L13 27.3 L7.4 23.6 Z M13.3 21.8 L26.7 16.9 L17.6 24.8 Z M29.5 13.6 L28.8 30.9 L21.5 26.7 Z M18.2 30 L21.2 31.6 L19.4 33.2 Z'/></svg>
<div class='a' style='left:2252px;top:1356px;width:56px;height:57px;background:#3F8CEF;border-radius:12px;'></div>
<svg class='a' style='left:2257px;top:1363px;' width='44' height='44' viewBox='0 0 44 44'><circle cx='23' cy='22' r='14' fill='none' stroke='#fff' stroke-width='4'/><path d='M13.5 29.5 L32.5 12.5' stroke='#fff' stroke-width='4'/></svg>
<div class='a' style='left:2141.5px;top:1443.5px;width:27.0px;height:26.5px;border:4px solid #6C6E79;border-radius:3px;'></div>
<div class='a' style='left:2153px;top:1450px;width:4px;height:20px;background:#6C6E79;'></div>
<div class='t' style='left:2180.8px;top:1441.5px;font-size:30px;line-height:30px;font-weight:400;color:#6C6E79;letter-spacing:-0.63px;'>Comment</div>
<div class='a' style='left:1770px;top:582px;width:640px;height:776px;background:#fff;border-radius:12px;box-shadow:0 2px 24px rgba(25,27,35,0.16),0 0 0 1px rgba(25,27,35,0.06);'></div>
<div class='a' style='left:1770px;top:590px;width:640px;height:263px;background:#DCEAFA;'></div>
<div class='a' style='left:1770px;top:590px;width:4px;height:263px;background:#3B8BF0;'></div>
<div class='a' style='left:2396px;top:590px;width:12px;height:398px;background:rgba(60,64,80,0.35);border-radius:6px;'></div>
<div class='t' style='left:1787.0px;top:606.5px;font-size:30px;line-height:30px;font-weight:400;color:#191B23;letter-spacing:0.03px;'>Authority Score</div>
<div class='t' style='left:1787.0px;top:645.3px;font-size:30px;line-height:30px;font-weight:400;color:#6C6E79;letter-spacing:0.07px;'>Authority Score is our proprietary metric</div>
<div class='t' style='left:1785.0px;top:685.2px;font-size:30px;line-height:30px;font-weight:400;color:#6C6E79;letter-spacing:-0.05px;'>measuring the domain’s reputability. It</div>
<div class='t' style='left:1786.0px;top:724.8px;font-size:30px;line-height:30px;font-weight:400;color:#6C6E79;letter-spacing:0.10px;'>accounts for the number and quality of its</div>
<div class='t' style='left:1785.0px;top:764.7px;font-size:30px;line-height:30px;font-weight:400;color:#6C6E79;letter-spacing:0.02px;'>backlinks, organic search traffic, and overall</div>
<div class='t' style='left:1786.0px;top:804.4px;font-size:30px;line-height:30px;font-weight:400;color:#6C6E79;letter-spacing:0.30px;'>authenticity of its profile.</div>
<div class='t' style='left:2122.0px;top:804.4px;font-size:30px;line-height:30px;font-weight:400;color:#2767CE;letter-spacing:-0.33px;'>Learn more</div>
<svg class='a' style='left:1780px;top:858px;' width='44' height='44' viewBox='0 0 44 44'><rect x='28' y='7' width='7.9' height='31.8' rx='3.95' fill='#ECAD3C'/><rect x='18.2' y='19' width='7.7' height='19.8' rx='3.85' fill='#D4762A'/><circle cx='12' cy='34.8' r='3.9' fill='#D4762A'/></svg>
<div class='t' style='left:1832.6px;top:871.7px;font-size:30px;line-height:30px;font-weight:400;color:#191B23;letter-spacing:-0.17px;'>Referral Traffic from GA</div>
<div class='t' style='left:1786.0px;top:910.8px;font-size:30px;line-height:30px;font-weight:400;color:#2767CE;letter-spacing:-0.07px;'>Connect Google Analytics</div>
<div class='t' style='left:1787.0px;top:950.7px;font-size:30px;line-height:30px;font-weight:400;color:#6C6E79;letter-spacing:-0.09px;'>The number of users from a referring domain.</div>
<div class='t' style='left:1785.0px;top:1015.5px;font-size:30px;line-height:30px;font-weight:400;color:#191B23;letter-spacing:-0.26px;'>Domain Category</div>
<div class='t' style='left:1786.0px;top:1054.4px;font-size:30px;line-height:30px;font-weight:400;color:#6C6E79;letter-spacing:-0.04px;'>Categories of a referring domain.</div>
<div class='t' style='left:1785.0px;top:1118.2px;font-size:30px;line-height:30px;font-weight:400;color:#191B23;letter-spacing:-0.09px;'>IP / Country</div>
<div class='t' style='left:1785.0px;top:1157.0px;font-size:30px;line-height:30px;font-weight:400;color:#6C6E79;letter-spacing:-0.10px;'>Internet Protocol (IP) address and</div>
<div class='t' style='left:1786.0px;top:1197.6px;font-size:30px;line-height:30px;font-weight:400;color:#6C6E79;letter-spacing:0.14px;'>geographical location of the referring</div>
<div class='t' style='left:1786.0px;top:1238.0px;font-size:30px;line-height:30px;font-weight:400;color:#6C6E79;letter-spacing:-0.22px;'>domain’s host.</div>
<div class='t' style='left:1786.0px;top:1300.3px;font-size:30px;line-height:30px;font-weight:400;color:#191B23;letter-spacing:-0.33px;'>Source Backlinks</div>
<div class='a' style='left:1787px;top:1343px;width:600px;height:4px;overflow:hidden'><div class='t' style='left:0;top:-4px;font-size:30px;line-height:30px;color:#6C6E79;opacity:.3'>The number of backlinks from a referring domain.</div></div>
<svg class='a' style='left:1800px;top:320px;' width='350' height='240' viewBox='0 0 350 240'><path d='M2117 348 C1990 385 1905 450 1866 520' transform='translate(-1800,-320)' fill='none' stroke='#E8402B' stroke-width='5' stroke-linecap='round'/><path d='M1854 541.5 L1856 515 L1877.5 527 Z' transform='translate(-1800,-320)' fill='#E8402B' stroke='#E8402B' stroke-width='2' stroke-linejoin='round'/></svg>
</body></html>
